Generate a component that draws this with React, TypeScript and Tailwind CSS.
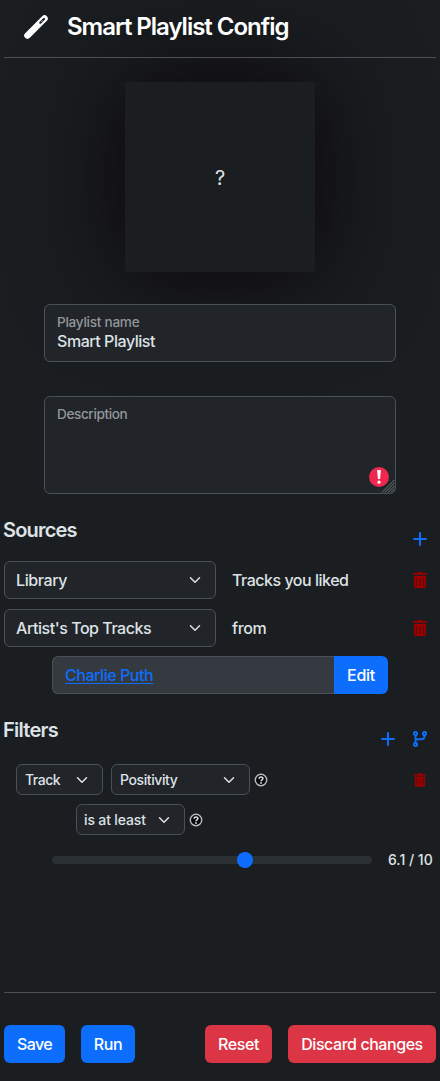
import React from "react";

type SvgProps = { className?: string };

function WandIcon({ className = "" }: SvgProps) {
  return (
    <svg viewBox="0 0 24 24" className={className}>
      <path d="M3.500 20.500 20.500 3.500" stroke="#fff" strokeWidth="6.600" strokeLinecap="round" />
      <path d="M16.300 7.700 20 4" stroke="#1a1e21" strokeWidth="2.200" strokeLinecap="round" />
      <path d="M17.300 6.900 18.700 5.500" stroke="#fff" strokeWidth=".7" />
    </svg>
  );
}

function TrashIcon({ className = "" }: SvgProps) {
  return (
    <svg viewBox="0 0 14 16" className={className}>
      <path d="M4.500 0h5v1.200H14V3H0V1.200h4.500z" fill="#9b0000" />
      <path d="M1 4h12v10.300A1.700 1.700 0 0 1 11.300 16H2.700A1.700 1.700 0 0 1 1 14.300z" fill="#9b0000" />
      <path d="M3.500 6v8M7 6v8M10.500 6v8" stroke="#5e090a" strokeWidth="1.200" />
    </svg>
  );
}

function PlusIcon() {
  return (
    <svg viewBox="0 0 14 14" className="size-3.5">
      <path d="M7 .3v13.400M.3 7h13.400" stroke="#0d6efd" strokeWidth="2" />
    </svg>
  );
}

function BranchIcon() {
  return (
    <svg viewBox="0 0 14 16" className="h-4 w-3.5" fill="none" stroke="#0d6efd" strokeWidth="1.900">
      <circle cx="2.500" cy="2.500" r="1.600" />
      <circle cx="11.500" cy="2.500" r="1.600" />
      <circle cx="2.500" cy="13.500" r="1.600" />
      <path d="M2.500 4v8M11.500 4v1.200q0 3-3 3H5q-2.500 0-2.500 2" />
    </svg>
  );
}

function Chevron() {
  return (
    <svg viewBox="0 0 16 16" className="size-3 shrink-0" fill="none" stroke="#dee2e6" strokeWidth="2" strokeLinecap="round" strokeLinejoin="round">
      <path d="m2 5 6 6 6-6" />
    </svg>
  );
}

function HelpIcon() {
  return (
    <svg viewBox="0 0 14 14" className="size-3.5 shrink-0" fill="none">
      <circle cx="7" cy="7" r="5.700" fill="#080909" stroke="#b9bdc2" strokeWidth="1.400" />
      <path d="M5.100 5.700C5.100 3.300 8.900 3.400 8.900 5.500 8.900 6.800 7 6.800 7 8.200" stroke="#dee2e6" strokeWidth="1.500" />
      <circle cx="7" cy="10" r=".9" fill="#dee2e6" />
    </svg>
  );
}

function Select({ label, className, text }: { label: string; className: string; text: string }) {
  return (
    <button className={`flex shrink-0 items-center justify-between rounded-md border border-[#495057] bg-[#212529] whitespace-nowrap ${className}`}>
      <span className={text}>{label}</span>
      <Chevron />
    </button>
  );
}

function Button({ label, className, text }: { label: string; className: string; text: string }) {
  return (
    <button className={`flex h-[38px] items-center justify-center rounded-md text-white whitespace-nowrap ${className}`}>
      <span className={text}>{label}</span>
    </button>
  );
}

export default function App() {
  return (
    <div className="flex h-[1081px] w-[440px] flex-col overflow-hidden bg-[#1a1e21] px-1 font-['Inter',sans-serif] text-base font-[480] text-[#dee2e6]">
      <header className="relative z-10 flex h-[58px] shrink-0 items-center border-b border-[#4c5054] pb-1 pl-5">
        <WandIcon className="size-6" />
        <h1 className="ml-[19px] text-2xl font-semibold tracking-[-1.02px] text-white">Smart Playlist Config</h1>
      </header>

      <div className="mt-6 flex size-[190px] shrink-0 items-center justify-center self-center bg-[#1a1e21] pt-0.5 text-xl font-normal shadow-[0_0_100px_6px_#0c0709]">
        ?
      </div>

      <section className="relative mt-8 flex flex-col gap-[34px] px-10">
        <div className="h-[58px] rounded-md border border-[#495057] bg-[#212529] px-3 pt-[7px]">
          <div className="text-[13.600px] leading-5 tracking-[-0.27px] text-[#92969a]">Playlist name</div>
          <div className="leading-[18px] tracking-[-0.45px]">Smart Playlist</div>
        </div>
        <div className="relative h-[98px] rounded-md border border-[#495057] bg-[#212529] px-3 pt-[7px]">
          <div className="text-[13.600px] leading-5 tracking-[-0.4px] text-[#92969a]">Description</div>
          <svg viewBox="0 0 20 20" className="absolute right-1.5 bottom-1.5 size-5">
            <circle cx="10" cy="10" r="10" fill="#f0284f" />
            <path d="M8.100 3h3.800l-.8 9H8.900z" fill="#fff" />
            <circle cx="10" cy="15.200" r="1.600" fill="#fff" />
          </svg>
          <svg viewBox="0 0 14 14" className="absolute right-0 bottom-0 size-3.5">
            <path d="M1 13.500 13.500 1M4 13.500 13.500 4M7 13.500 13.500 7M10 13.500 13.500 10" stroke="#858a8e" strokeWidth=".8" />
          </svg>
        </div>
      </section>

      <section className="mt-[21px]">
        <div className="flex h-[46px] justify-between">
          <h2 className="-ml-px text-xl leading-[30px] font-semibold tracking-[-0.8px]">Sources</h2>
          <div className="mt-[17px] mr-[9px]"><PlusIcon /></div>
        </div>
        <div className="flex h-[38px] items-center">
          <Select label="Library" className="h-[38px] w-[212px] pr-3.5 pl-[11px]" text="tracking-[-0.4px]" />
          <span className="ml-4 flex-1 tracking-[-0.48px]">Tracks you liked</span>
          <TrashIcon className="mr-[9px] h-4 w-3.5" />
        </div>
        <div className="mt-2.5 flex h-[38px] items-center">
          <Select label="Artist's Top Tracks" className="h-[38px] w-[212px] pr-3.5 pl-[11px]" text="tracking-[-0.45px]" />
          <span className="ml-4 flex-1 tracking-[-0.4px]">from</span>
          <TrashIcon className="mr-[9px] h-4 w-3.5" />
        </div>
        <div className="mt-[9px] ml-12 flex h-[38px] w-[336px]">
          <div className="flex flex-1 items-center rounded-l-md border border-r-0 border-[#495057] bg-[#343a40] pl-3">
            <a className="tracking-[-0.45px] text-[#0d6efd] underline underline-offset-2">Charlie Puth</a>
          </div>
          <button className="w-[54px] rounded-r-md bg-[#0d6efd] font-medium tracking-[-0.3px] text-white">Edit</button>
        </div>
      </section>

      <section className="mt-[21px]">
        <div className="flex h-[49px] justify-between">
          <h2 className="-ml-px text-xl leading-[30px] font-semibold tracking-[-0.75px]">Filters</h2>
          <div className="mt-[16px] mr-[9px] flex h-4 items-center gap-[18px]"><PlusIcon /><BranchIcon /></div>
        </div>
        <div className="flex h-[31px] items-center pl-3 text-sm">
          <Select label="Track" className="h-[31px] w-[87px] pr-3.5 pl-2" text="tracking-[-0.5px]" />
          <Select label="Positivity" className="ml-2 h-[31px] w-[139px] pr-3.5 pl-2" text="tracking-[-0.4px]" />
          <div className="ml-1 flex-1"><HelpIcon /></div>
          <TrashIcon className="mr-[10px] h-3.5 w-3" />
        </div>
        <div className="mt-[9px] flex h-[31px] items-center gap-1 pl-[72px] text-sm">
          <Select label="is at least" className="h-[31px] w-[109px] pr-3.5 pl-[7px]" text="tracking-[-0.15px]" />
          <HelpIcon />
        </div>
        <div className="mt-[15px] flex h-5 items-center pl-12 text-sm">
          <div className="flex h-2 w-80 items-center rounded-full bg-[#2b3035]">
            <div className="ml-[185px] size-4 rounded-full bg-[#0d6efd]" />
          </div>
          <span className="ml-4 font-medium whitespace-nowrap">6.1 / 10</span>
        </div>
      </section>

      <footer className="mt-auto flex h-[89px] shrink-0 items-start border-t border-[#4c5054] pt-8 font-medium">
        <Button label="Save" className="w-[61px] bg-[#0d6efd]" text="tracking-[-0.6px]" />
        <Button label="Run" className="ml-4 w-[54px] bg-[#0d6efd]" text="tracking-[-0.4px]" />
        <Button label="Reset" className="ml-auto w-[67px] bg-[#dc3545]" text="tracking-[-0.4px]" />
        <Button label="Discard changes" className="ml-4 w-[148px] bg-[#dc3545]" text="tracking-[-0.44px]" />
      </footer>
    </div>
  );
}
